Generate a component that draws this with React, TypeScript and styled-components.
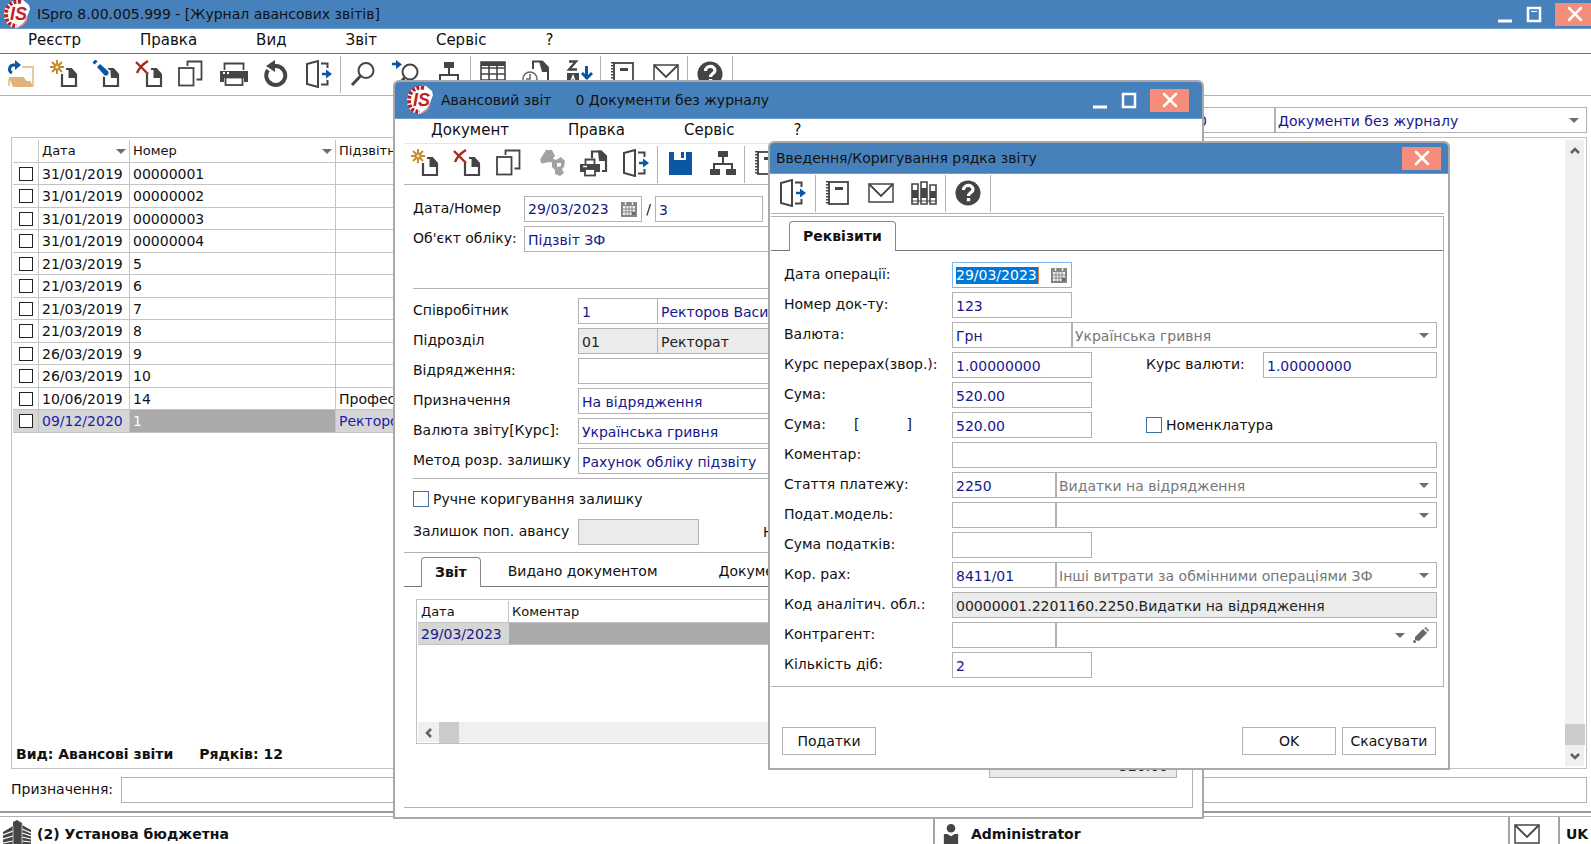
import React, { useId } from "react";
import styled, { createGlobalStyle, css } from "styled-components";

const BLUE = "#4781bb";
const NAVY = "#17178a";
const LINE = "#b2b2b2";
const DARK = "#454545";
const ACCENT = "#0b57a4";

const GlobalStyle = createGlobalStyle`
  *, *::before, *::after { box-sizing: border-box; }
  html, body { margin: 0; height: 100%; }
  body { background: #fff; overflow: hidden; }
  #root { height: 100%; }
  body, input, select, button, textarea {
    font-family: "DejaVu Sans", Verdana, sans-serif;
    font-size: 14px;
    color: #111;
  }
  button { padding: 0; margin: 0; border: 0; background: none; }
  input, select { margin: 0; border-radius: 0; }
`;

/* ---------- icons ---------- */

const Svg = ({ children, size = 28 }: { children: React.ReactNode; size?: number }) => (
  <svg width={size} height={size} viewBox="0 0 28 28" fill="none" aria-hidden="true">
    {children}
  </svg>
);

const DocShape = () => (
  <>
    <path d="M16 9h5l5 6v11H12V14" stroke={DARK} strokeWidth="2.200" />
    <path d="M16 8h5.500L27 14v4h-8.500V10z" fill={DARK} />
  </>
);

const icons: Record<string, React.ReactNode> = {
  open: (
    <>
      <path d="M15 7h11v19" stroke="#e6c596" strokeWidth="1.8" />
      <path d="M2 19v7" stroke="#e6c596" strokeWidth="1.8" />
      <path d="M1.500 17h15l3 4h4l3 6H6z" fill="#deb478" />
      <path d="M5 13C1 11 2 5 7 5h4" stroke={ACCENT} strokeWidth="3" />
      <path d="M8 0l6 5-6 5z" fill={ACCENT} />
    </>
  ),
  create: (
    <>
      <path d="M7 0v14M0 7h14M2 2l10 10M12 2L2 12" stroke="#c98a2b" strokeWidth="2" />
      <circle cx="7" cy="7" r="2.500" fill="#f7e6c8" stroke="#c98a2b" strokeWidth="2" />
      <DocShape />
    </>
  ),
  edit: (
    <>
      <DocShape />
      <path d="M4 7l4-4 9 8 1 6-6-1z" fill={ACCENT} stroke="#fff" strokeWidth="1.500" />
      <path d="M1.500 3.500l3-3" stroke={ACCENT} strokeWidth="3" />
      <path d="M15 16.500l2.500-2.500" stroke="#fff" strokeWidth="1.500" />
    </>
  ),
  remove: (
    <>
      <path d="M1 2l12 12M13 1C8 4 4 8 2 13" stroke="#a62c1d" strokeWidth="2.400" />
      <DocShape />
    </>
  ),
  copy: (
    <>
      <path d="M10.500 6V1.500h14v18h-5" stroke={DARK} strokeWidth="1.800" />
      <rect x="2" y="8" width="14.500" height="17.500" stroke={DARK} strokeWidth="1.800" />
    </>
  ),
  print: (
    <>
      <path d="M4.500 10V3.500h19V10" stroke={DARK} strokeWidth="1.800" />
      <path d="M0 11h28v11h-4v-4H4v4H0z" fill={DARK} />
      <rect x="5.500" y="17.500" width="17" height="7.500" fill="#fff" stroke={DARK} strokeWidth="1.800" />
      <path d="M3 13h2M7 13h2" stroke="#fff" strokeWidth="2" />
    </>
  ),
  refresh: (
    <>
      <path d="M6 10A9.500 9.500 0 1 0 14 6H10" stroke={DARK} strokeWidth="4" />
      <path d="M13 0L4 6l9 6z" fill={DARK} />
    </>
  ),
  exit: (
    <>
      <path d="M2 4l11-3v26L2 24z" stroke={DARK} strokeWidth="2" />
      <path d="M16 3.500h6.500V8M22.500 20v4.500H16" stroke={DARK} strokeWidth="2" />
      <path d="M17 14h6" stroke={ACCENT} strokeWidth="2.500" />
      <path d="M21 9.500l6 4.500-6 4.500z" fill={ACCENT} />
    </>
  ),
  search: (
    <>
      <circle cx="17" cy="10.500" r="7.500" stroke={DARK} strokeWidth="2" />
      <path d="M11.500 16L3 25" stroke={DARK} strokeWidth="3" />
    </>
  ),
  searchNext: (
    <>
      <circle cx="18" cy="12" r="7.500" stroke={DARK} strokeWidth="2" />
      <path d="M12.500 18L5 26" stroke={DARK} strokeWidth="3" />
      <path d="M0 4h5" stroke={ACCENT} strokeWidth="2.500" />
      <path d="M4 0l6 4.500-6 4.500z" fill={ACCENT} />
    </>
  ),
  tree: (
    <>
      <path d="M14 7v8M5 20v-5h18v5" stroke={DARK} strokeWidth="2" />
      <path d="M9 2h10v6H9zM1 20h10v6H1zM17 20h10v6H17z" fill={DARK} />
    </>
  ),
  table: (
    <>
      <path d="M2 2h24v4H2z" fill={DARK} />
      <path d="M2 2h24v24H2zM2 8h24M2 14h24M2 20h24M10 3v23M18 3v23" stroke={DARK} strokeWidth="1.600" />
    </>
  ),
  docClock: (
    <>
      <path d="M11 9V1.500h9l6 6V24h-6" stroke={DARK} strokeWidth="2" />
      <path d="M17 1h4l6 7v4h-7z" fill={DARK} />
      <circle cx="8" cy="19" r="7" stroke="#666" strokeWidth="1.500" fill="#fff" />
      <path d="M8 14v5h-4" stroke="#666" strokeWidth="1.500" />
    </>
  ),
  sort: (
    <>
      <path d="M4 1.500h7L4 9.500h8" stroke={DARK} strokeWidth="2.400" />
      <rect x="2" y="13" width="12" height="13" fill={DARK} />
      <path d="M5 24l3-8 3 8M6 21.500h4" stroke="#fff" strokeWidth="1.500" />
      <path d="M21.500 6v13" stroke={ACCENT} strokeWidth="3" />
      <path d="M17 13l5 5 5-5" stroke={ACCENT} strokeWidth="3" />
    </>
  ),
  notebook: (
    <>
      <rect x="5" y="3" width="19" height="22" stroke={DARK} strokeWidth="1.800" />
      <path d="M4 2v24" stroke={DARK} strokeWidth="4" strokeDasharray="1.500 1.500" />
      <path d="M11 9.500h8" stroke={DARK} strokeWidth="3" />
    </>
  ),
  mail: (
    <>
      <rect x="2" y="5" width="24" height="18" stroke={DARK} strokeWidth="1.500" />
      <path d="M2 5l12 12L26 5" stroke={DARK} strokeWidth="1.800" />
    </>
  ),
  help: (
    <>
      <circle cx="14" cy="14" r="12.500" fill={DARK} />
      <path d="M9.500 11c0-6 9.500-6 9.500-.5 0 3-4.500 3-4.500 6.500" stroke="#fff" strokeWidth="3.200" />
      <path d="M12.800 19h3.400v3.300h-3.400z" fill="#fff" />
    </>
  ),
  books: (
    <>
      <path d="M2 5h6v20H2zM11 3h6v22h-6zM20 6h6v19h-6z" stroke={DARK} strokeWidth="1.600" />
      <path d="M2 11h6v8H2zM11 9h6v10h-6zM20 12h6v7h-6z" fill={DARK} />
      <path d="M2 22h24" stroke={DARK} strokeWidth="1.200" />
    </>
  ),
  save: (
    <>
      <path d="M3 3h23v23H3z" fill={ACCENT} />
      <path d="M8 2h12v9H8z" fill="#fff" />
      <path d="M15 3h3v6h-3z" fill={ACCENT} />
    </>
  ),
  link: (
    <>
      <path d="M8 1h6l3 6-5 6-6 1-2 1-2-4 1-2z" fill="#a2a2a2" />
      <path d="M12 11l6 3" stroke="#a2a2a2" strokeWidth="3" />
      <path
        fillRule="evenodd"
        d="M14 9l4 2 5-3 4 4-1 6-2 2 2 4-4 3-5-2 0-4-3-3zM19 14v4l4-1v-3z"
        fill="#a2a2a2"
      />
    </>
  ),
  printDoc: (
    <>
      <path d="M12 9V2.500h9l5 5V22h-4" stroke={DARK} strokeWidth="2.200" />
      <path d="M18 1.500h3.500L27 7v5h-8z" fill={DARK} />
      <path d="M5.500 15v-4.500h9V15" stroke={DARK} strokeWidth="1.800" />
      <path d="M0 15h20v8H0z" fill={DARK} />
      <rect x="5" y="20" width="10" height="6.500" fill="#fff" stroke={DARK} strokeWidth="1.800" />
      <path d="M3 17.500h4" stroke="#fff" strokeWidth="1.500" />
    </>
  ),
  building: (
    <>
      <path d="M0 12l10-6v22H0zM10 2l4-2 5 3v25h-9zM19 5l9 5v18h-9z" fill={DARK} />
      <path d="M0 15l10-4M0 19l10-3M0 23l10-2M0 27l10-1M19 9l9 4M19 13l9 3M19 17l9 2M19 21l9 1" stroke="#fff" strokeWidth="1.200" />
      <path d="M10 6v22M19 5v23" stroke="#bbb" strokeWidth="1" />
    </>
  ),
  person: (
    <>
      <circle cx="14" cy="6" r="6" fill={DARK} />
      <path d="M4 14h5l5 3 5-3h5v14H4z" fill={DARK} />
    </>
  ),
};

const Icon = ({ name, size }: { name: string; size?: number }) => <Svg size={size}>{icons[name]}</Svg>;

const Logo = () => (
  <svg width="28" height="30" viewBox="0 0 28 30" aria-label="IS" role="img">
    <path d="M20 1C8-1 0 7 1 17c1 8 6 12 13 12 5-3 9-7 10-11l3-8-1-4z" fill="#fff" />
    <path d="M18 3C9 1 3 7 3 15s4 12 11 12" fill="none" stroke="#b3222a" strokeWidth="4" strokeDasharray="3 1.500" />
    <path d="M16 28c4-2 7-5 8-9" fill="none" stroke="#d98a8c" strokeWidth="1.500" />
    <text x="7" y="21" fontFamily="Liberation Sans, Arial, sans-serif" fontSize="18" fontWeight="700" fontStyle="italic" fill="#c01f28">
      IS
    </text>
  </svg>
);

const CalendarIcon = () => (
  <svg width="16" height="16" viewBox="0 0 16 16" aria-hidden="true">
    <path d="M0 1h16v15H0z" fill="#858585" />
    <path d="M2 5h12v9H2z" fill="#f2f2f2" />
    <path d="M2 8h12M2 11h12M5 5v9M8 5v9M11 5v9" stroke="#858585" />
    <path d="M11 11h3v3h-3z" fill="#666" />
    <path d="M4.500 0v4M11.500 0v4" stroke="#eee" strokeWidth="1.500" />
  </svg>
);

const PencilIcon = () => (
  <svg width="16" height="16" viewBox="0 0 16 16" aria-hidden="true">
    <path d="M10 2l4 4-8 8-4-1 0-3z" fill="#686868" />
    <path d="M11 1l2-1 3 3-1 2z" fill="#888" />
    <circle cx="1.500" cy="14.500" r="1.500" fill="#686868" />
  </svg>
);

/* ---------- window chrome ---------- */

const TitleBar = styled.header<{ $height: number; $pad: string }>`
  display: flex;
  align-items: center;
  flex: none;
  height: ${(p) => p.$height}px;
  padding: ${(p) => p.$pad};
  background: ${BLUE};
  border-bottom: 1px solid #6d9bca;
  overflow: hidden;
`;

const TitleText = styled.h1<{ $indent: number }>`
  margin: 0;
  flex: 1;
  display: flex;
  gap: 24px;
  padding-left: ${(p) => p.$indent}px;
  font-size: 14px;
  font-weight: 400;
  white-space: nowrap;
`;

const Controls = styled.div`
  display: flex;
  align-items: center;
  flex: none;
`;

const ControlButton = styled.button<{ $close?: boolean }>`
  display: grid;
  place-items: center;
  width: ${(p) => (p.$close ? 39 : 29)}px;
  height: 23px;
  margin-left: ${(p) => (p.$close ? 7 : 0)}px;
  background: ${(p) => (p.$close ? "#f48d79" : "transparent")};
`;

const CloseButton = () => (
  <ControlButton $close aria-label="Закрити">
    <svg width="16" height="16" viewBox="0 0 16 16" aria-hidden="true">
      <path d="M2 2l12 12M14 2L2 14" stroke="#fff" strokeWidth="2.500" strokeLinecap="round" />
    </svg>
  </ControlButton>
);

const WindowControls = ({ restored }: { restored?: boolean }) => (
  <Controls>
    <ControlButton aria-label="Згорнути">
      <svg width="16" height="18" viewBox="0 0 16 18" aria-hidden="true">
        <path d="M1 16h14" stroke="#fff" strokeWidth="3" />
      </svg>
    </ControlButton>
    <ControlButton aria-label="Розгорнути">
      <svg width="16" height="18" viewBox="0 0 16 18" aria-hidden="true">
        <rect x="2" y="3" width="12" height="13" fill="none" stroke="#fff" strokeWidth="2.500" />
        {restored && <path d="M5 6.500h6" stroke="#fff" />}
      </svg>
    </ControlButton>
    <CloseButton />
  </Controls>
);

const MenuBar = styled.nav<{ $indent: number }>`
  display: flex;
  align-items: center;
  flex: none;
  gap: 59px;
  height: 24px;
  padding: 0 0 2px ${(p) => p.$indent}px;
`;

const MenuItem = styled.button`
  font-size: 15px;
  line-height: 20px;
`;

const Toolbar = styled.div<{ $height: number }>`
  display: flex;
  align-items: center;
  flex: none;
  height: ${(p) => p.$height}px;
  border-bottom: 1px solid ${LINE};
`;

const ToolGroup = styled.div<{ $width: number }>`
  display: flex;
  flex: none;
  width: ${(p) => p.$width}px;
  height: 37px;
  border-right: 1px solid ${LINE};
`;

const ToolButton = styled.button`
  flex: 1 1 0;
  min-width: 0;
  display: grid;
  place-items: center;
  padding-bottom: 2px;
`;

const GROUP_WIDTHS: Record<number, number> = { 1: 45, 2: 87, 3: 130, 6: 254, 8: 341 };

const Tools = ({ groups }: { groups: string[][] }) => (
  <>
    {groups.map((group) => (
      <ToolGroup key={group.join()} $width={GROUP_WIDTHS[group.length]}>
        {group.map((name) => (
          <ToolButton key={name} aria-label={name}>
            <Icon name={name} />
          </ToolButton>
        ))}
      </ToolGroup>
    ))}
  </>
);

const Popup = styled.section`
  position: absolute;
  display: flex;
  flex-direction: column;
  background: #fff;
  border: 2px solid #a9a9a9;
  border-radius: 6px 6px 0 0;
  overflow: hidden;
`;

/* ---------- form parts ---------- */

const boxStyle = css`
  height: 26px;
  border: 1px solid ${LINE};
  background: #fff;
`;

const TextBox = styled.input<{ $width?: number }>`
  ${boxStyle}
  ${(p) => (p.$width ? `width: ${p.$width}px; flex: none;` : "flex: 1; min-width: 0;")}
  padding: 1px 3px 0;
  color: ${NAVY};
  outline: none;
  &:read-only {
    background: #ebebeb;
    color: #222;
  }
`;

const NameBox = styled(TextBox)`
  border-left: 0;
`;

const AmountBox = styled(TextBox)`
  text-align: right;
  padding: 2px 8px 0;
`;

const DateFrame = styled.div<{ $active?: boolean }>`
  ${boxStyle}
  display: flex;
  align-items: center;
  justify-content: space-between;
  flex: none;
  width: ${(p) => (p.$active ? 120 : 118)}px;
  padding: 0 4px 0 3px;
  border-color: ${(p) => (p.$active ? "#7fb6ee" : LINE)};
`;

const DateInput = styled.input<{ $active?: boolean }>`
  width: 83px;
  height: 17px;
  padding: 0;
  border: 0;
  outline: none;
  color: ${(p) => (p.$active ? "#fff" : NAVY)};
  background: ${(p) => (p.$active ? "#0078d7" : "#fff")};
  border-right: 1px solid ${(p) => (p.$active ? "#e08040" : "transparent")};
`;

const PlainButton = styled.button`
  display: grid;
  place-items: center;
`;

const DateBox = ({ id, active }: { id: string; active?: boolean }) => (
  <DateFrame $active={active}>
    <DateInput id={id} $active={active} defaultValue="29/03/2023" />
    <PlainButton aria-label="Календар">
      <CalendarIcon />
    </PlainButton>
  </DateFrame>
);

const SelectFrame = styled.div<{ $width?: number }>`
  ${boxStyle}
  border-left-width: 2px;
  margin-left: -1px;
  display: flex;
  align-items: center;
  ${(p) => (p.$width ? `width: ${p.$width}px; flex: none;` : "flex: 1; min-width: 0;")}
  padding-right: 7px;
  gap: 8px;
`;

const SelectInput = styled.select<{ $dark?: boolean }>`
  appearance: none;
  flex: 1;
  min-width: 0;
  height: 24px;
  padding: 1px 2px 0;
  border: 0;
  outline: none;
  background: transparent;
  color: ${(p) => (p.$dark ? NAVY : "#777")};
`;

const Triangle = styled.span`
  flex: none;
  border: 5px solid transparent;
  border-top-color: #6e6e6e;
  border-bottom: 0;
`;

const Combo = ({
  label,
  value,
  dark,
  width,
  editable,
}: {
  label: string;
  value: string;
  dark?: boolean;
  width?: number;
  editable?: boolean;
}) => (
  <SelectFrame $width={width}>
    <SelectInput aria-label={label} $dark={dark} defaultValue={value}>
      <option>{value}</option>
    </SelectInput>
    <Triangle />
    {editable && (
      <PlainButton aria-label="Редагувати">
        <PencilIcon />
      </PlainButton>
    )}
  </SelectFrame>
);

const Row = styled.div<{ $label: number }>`
  display: grid;
  grid-template-columns: ${(p) => p.$label}px minmax(0, 1fr);
  align-items: center;
  height: 26px;
`;

const Label = styled.label`
  padding-bottom: 2px;
  white-space: nowrap;
`;

const FieldGroup = styled.div`
  display: flex;
  align-items: center;
  min-width: 0;
`;

const Brackets = styled.span`
  display: inline-flex;
  justify-content: space-between;
  width: 58px;
  margin-left: 28px;
`;

const FormRow = ({
  label,
  labelWidth,
  children,
}: {
  label: React.ReactNode;
  labelWidth: number;
  children: (id: string) => React.ReactNode;
}) => {
  const id = useId();
  return (
    <Row $label={labelWidth}>
      <Label htmlFor={id}>{label}</Label>
      <FieldGroup>{children(id)}</FieldGroup>
    </Row>
  );
};

const Tick = styled.label`
  display: inline-flex;
  align-items: center;
  gap: 4px;
  height: 16px;
  white-space: nowrap;
`;

const TickBox = styled.input.attrs({ type: "checkbox" })<{ $size?: number }>`
  appearance: none;
  flex: none;
  width: ${(p) => p.$size ?? 16}px;
  height: ${(p) => p.$size ?? 16}px;
  background: #fff;
  border: 1px solid #41709f;
`;

const RowTick = styled(TickBox)`
  display: block;
  margin: 0 auto;
  border: 1px solid #222;
`;

const TabStrip = styled.div<{ $indent: number }>`
  display: flex;
  flex: none;
  height: 30px;
  &::before {
    content: "";
    width: ${(p) => p.$indent}px;
    border-bottom: 1px solid #777;
  }
  &::after {
    content: "";
    flex: 1;
    border-bottom: 1px solid #777;
  }
`;

const Tab = styled.button<{ $active?: boolean }>`
  flex: none;
  ${(p) =>
    p.$active
      ? css`
          padding: 0 13px 2px;
          font-weight: 700;
          border: 1px solid #888;
          border-bottom: 0;
          border-radius: 4px 4px 0 0;
        `
      : css`
          padding: 0 34px 2px 27px;
          border-bottom: 1px solid #777;
        `}
`;

/* ---------- journal (main window) ---------- */

const Shell = styled.main`
  position: relative;
  display: flex;
  flex-direction: column;
  height: 100%;
  overflow: hidden;
`;

const MainControls = styled.div`
  margin-right: -3px;
`;

const MainToolbar = styled(Toolbar)`
  border-top: 1px solid #6f6f6f;
`;

const FilterRow = styled.div`
  display: flex;
  flex: none;
  justify-content: flex-end;
  padding: 11px 4px 4px;
`;

const GridFrame = styled.div`
  display: flex;
  flex: 1;
  min-height: 0;
  margin: 0 4px 0 11px;
  padding: 2px 2px 2px 1px;
  border: 1px solid #c0c0c6;
`;

const GridBody = styled.div`
  flex: 1;
  min-width: 0;
  display: flex;
  flex-direction: column;
  justify-content: space-between;
`;

const GridTable = styled.table`
  width: 900px;
  table-layout: fixed;
  border-collapse: separate;
  border-spacing: 0;
  th, td {
    height: 22px;
    padding: 0 3px;
    border-right: 1px solid #c4c4c4;
    border-bottom: 1px solid #c4c4c4;
    text-align: left;
    font-weight: 400;
    line-height: 16px;
    white-space: nowrap;
    overflow: hidden;
  }
  th {
    height: 23px;
    font-size: 13px;
  }
  th:first-child, td:first-child { padding: 0; }
  tbody tr:nth-child(even) td { height: 23px; }
`;

const JournalRow = styled.tr<{ $selected: boolean }>`
  ${(p) =>
    p.$selected &&
    css`
      background: #d6d6d6;
      color: #1c1ca8;
      td:nth-child(3) {
        background: #aaa;
        color: #fff;
      }
    `}
`;

const HeadCell = styled.div`
  display: flex;
  align-items: center;
  justify-content: space-between;
`;

const Summary = styled.div`
  display: flex;
  gap: 26px;
  padding: 0 3px 4px;
  font-weight: 700;
  line-height: 16px;
`;

const VScroll = styled.div`
  display: flex;
  flex-direction: column;
  align-items: center;
  flex: none;
  width: 19px;
  background: #efefef;
`;

const ScrollSpace = styled.div`
  flex: 1;
`;

const ScrollThumb = styled.div`
  width: 20px;
  height: 21px;
  background: #cbcbcb;
`;

const ScrollButton = styled.button`
  display: grid;
  place-items: center;
  width: 21px;
  height: 21px;
`;

const Chevron = ({ turn }: { turn: "up" | "down" | "left" }) => (
  <svg width="12" height="12" viewBox="0 0 12 12" fill="none" aria-hidden="true">
    <path
      d={turn === "up" ? "M2 8l4-4 4 4" : turn === "down" ? "M2 4l4 4 4-4" : "M8 2L4 6l4 4"}
      stroke="#606060"
      strokeWidth="2.500"
    />
  </svg>
);

const PurposeRow = styled.div`
  display: flex;
  align-items: center;
  flex: none;
  gap: 8px;
  padding: 8px 4px 8px 11px;
`;

const StatusBar = styled.footer`
  display: flex;
  flex: none;
  height: 33px;
  border-top: 2px solid #999;
  font-weight: 700;
  padding-top: 3px;
`;

const StatusCell = styled.div<{ $width?: number; $gap?: number; $pad: number }>`
  display: flex;
  align-items: center;
  gap: ${(p) => p.$gap ?? 0}px;
  ${(p) => (p.$width ? `flex: none; width: ${p.$width}px;` : "flex: 1;")}
  padding-left: ${(p) => p.$pad}px;
  padding-top: 7px;
  border-top: 1px solid ${LINE};
  & + & { border-left: 2px solid #a4a4a4; }
  white-space: nowrap;
  overflow: hidden;
`;

const journal: [string, string, string][] = [
  ["31/01/2019", "00000001", ""],
  ["31/01/2019", "00000002", ""],
  ["31/01/2019", "00000003", ""],
  ["31/01/2019", "00000004", ""],
  ["21/03/2019", "5", ""],
  ["21/03/2019", "6", ""],
  ["21/03/2019", "7", ""],
  ["21/03/2019", "8", ""],
  ["26/03/2019", "9", ""],
  ["26/03/2019", "10", ""],
  ["10/06/2019", "14", "Професор"],
  ["09/12/2020", "1", "Ректоров"],
];

const Journal = () => (
  <>
    <TitleBar $height={29} $pad="0 0 0 3px">
      <Logo />
      <TitleText $indent={6}>ISpro 8.00.005.999 - [Журнал авансових звітів]</TitleText>
      <MainControls>
        <WindowControls restored />
      </MainControls>
    </TitleBar>
    <MenuBar $indent={28}>
      {["Реєстр", "Правка", "Вид", "Звіт", "Сервіс", "?"].map((m) => (
        <MenuItem key={m}>{m}</MenuItem>
      ))}
    </MenuBar>
    <MainToolbar $height={43}>
      <Tools
        groups={[
          ["open", "create", "edit", "remove", "copy", "print", "refresh", "exit"],
          ["search", "searchNext", "tree"],
          ["table", "docClock", "sort"],
          ["notebook", "mail"],
          ["help"],
        ]}
      />
    </MainToolbar>
    <FilterRow>
      <TextBox $width={81} defaultValue="0" aria-label="Код журналу" />
      <Combo label="Журнал" value="Документи без журналу" dark width={313} />
    </FilterRow>
    <GridFrame>
      <GridBody>
        <GridTable>
          <colgroup>
            <col width="26" />
            <col width="91" />
            <col width="206" />
            <col />
          </colgroup>
          <thead>
            <tr>
              <th aria-label="Вибір" />
              <th>
                <HeadCell>
                  Дата <Triangle />
                </HeadCell>
              </th>
              <th>
                <HeadCell>
                  Номер <Triangle />
                </HeadCell>
              </th>
              <th>Підзвітна особа</th>
            </tr>
          </thead>
          <tbody>
            {journal.map(([date, num, who], i) => (
              <JournalRow key={num} $selected={i === journal.length - 1}>
                <td>
                  <RowTick $size={14} aria-label={`Рядок ${num}`} />
                </td>
                <td>{date}</td>
                <td>{num}</td>
                <td>{who}</td>
              </JournalRow>
            ))}
          </tbody>
        </GridTable>
        <Summary>
          <span>Вид: Авансові звіти</span>
          <span>Рядків: 12</span>
        </Summary>
      </GridBody>
      <VScroll>
        <ScrollButton aria-label="Вгору">
          <Chevron turn="up" />
        </ScrollButton>
        <ScrollSpace />
        <ScrollThumb />
        <ScrollButton aria-label="Вниз">
          <Chevron turn="down" />
        </ScrollButton>
      </VScroll>
    </GridFrame>
    <PurposeRow>
      <Label htmlFor="purpose">Призначення:</Label>
      <TextBox id="purpose" />
    </PurposeRow>
    <StatusBar>
      <StatusCell $pad={3} $gap={6} $width={933}>
        <Icon name="building" /> (2) Установа бюджетна
      </StatusCell>
      <StatusCell $pad={6} $gap={10}>
        <Icon name="person" size={20} /> Administrator
      </StatusCell>
      <StatusCell $pad={3} $width={50}>
        <Icon name="mail" />
      </StatusCell>
      <StatusCell $pad={6} $width={33}>
        UK
      </StatusCell>
    </StatusBar>
  </>
);

/* ---------- advance report window ---------- */

const ReportWindow = styled(Popup)`
  left: 393px;
  top: 80px;
  width: 811px;
  height: 739px;
`;

const ReportContent = styled.div`
  display: flex;
  flex-direction: column;
  flex: 1;
  min-height: 0;
  padding: 0 9px 9px;
`;

const ReportToolbar = styled(Toolbar)`
  border-top: 1px solid #e6e6e6;
`;

const ReportForm = styled.div`
  display: flex;
  flex-direction: column;
  flex: none;
  gap: 4px;
  padding: 11px 12px 7px 9px;
`;

const Rule = styled.hr<{ $above: number; $below: number }>`
  width: 100%;
  margin: ${(p) => `${p.$above}px 0 ${p.$below}px`};
  border: 0;
  border-top: 1px solid ${LINE};
`;

const TickRow = styled.div`
  display: flex;
  padding-bottom: 8px;
`;

const Slash = styled.span`
  width: 13px;
  text-align: center;
`;

const NextLabel = styled.label`
  margin-left: 64px;
`;

const ReportPanel = styled.div`
  display: flex;
  flex-direction: column;
  flex: 1;
  padding-top: 4px;
  border: 1px solid ${LINE};
  border-left: 0;
`;

const LineFrame = styled.div`
  display: flex;
  flex-direction: column;
  justify-content: space-between;
  height: 145px;
  margin: 12px 15px 8px 12px;
  padding: 1px;
  border: 1px solid #c0c0c6;
`;

const LineTable = styled.table`
  width: 100%;
  table-layout: fixed;
  border-collapse: separate;
  border-spacing: 0;
  th, td {
    height: 22px;
    padding: 0 3px;
    text-align: left;
    font-weight: 400;
    border-bottom: 1px solid #c4c4c4;
  }
  th { font-size: 13px; }
  th:first-child { border-right: 1px solid #c4c4c4; }
  td { background: #aaa; }
  td:first-child {
    background: #d6d6d6;
    color: ${NAVY};
  }
`;

const HScroll = styled.div`
  display: flex;
  height: 20px;
  background: #efefef;
`;

const Totals = styled.div`
  display: flex;
  justify-content: flex-end;
  padding-right: 15px;
`;

const Report = () => (
  <ReportWindow>
    <TitleBar $height={37} $pad="0 13px 0 11px">
      <Logo />
      <TitleText $indent={7}>
        <span>Авансовий звіт</span>
        <span>0 Документи без журналу</span>
      </TitleText>
      <WindowControls />
    </TitleBar>
    <MenuBar $indent={36}>
      {["Документ", "Правка", "Сервіс", "?"].map((m) => (
        <MenuItem key={m}>{m}</MenuItem>
      ))}
    </MenuBar>
    <ReportContent>
      <ReportToolbar $height={42}>
        <Tools
          groups={[
            ["create", "remove", "copy", "link", "printDoc", "exit"],
            ["save", "tree"],
            ["notebook", "mail"],
          ]}
        />
      </ReportToolbar>
      <ReportForm>
        <FormRow labelWidth={111} label="Дата/Номер">
          {(id) => (
            <>
              <DateBox id={id} />
              <Slash>/</Slash>
              <TextBox $width={108} defaultValue="3" aria-label="Номер" />
            </>
          )}
        </FormRow>
        <FormRow labelWidth={111} label="Об'єкт обліку:">
          {(id) => <TextBox id={id} defaultValue="Підзвіт ЗФ" />}
        </FormRow>
        <Rule $above={32} $below={5} />
        <FormRow labelWidth={165} label="Співробітник">
          {(id) => (
            <>
              <TextBox id={id} $width={80} defaultValue="1" />
              <NameBox defaultValue="Ректоров Василь" aria-label="ПІБ" />
            </>
          )}
        </FormRow>
        <FormRow labelWidth={165} label="Підрозділ">
          {(id) => (
            <>
              <TextBox id={id} $width={80} readOnly defaultValue="01" />
              <NameBox readOnly defaultValue="Ректорат" aria-label="Назва підрозділу" />
            </>
          )}
        </FormRow>
        <FormRow labelWidth={165} label="Відрядження:">
          {(id) => <TextBox id={id} />}
        </FormRow>
        <FormRow labelWidth={165} label="Призначення">
          {(id) => <TextBox id={id} defaultValue="На відрядження" />}
        </FormRow>
        <FormRow labelWidth={165} label="Валюта звіту[Курс]:">
          {(id) => <TextBox id={id} defaultValue="Українська гривня" />}
        </FormRow>
        <FormRow labelWidth={165} label="Метод розр. залишку">
          {(id) => <TextBox id={id} defaultValue="Рахунок обліку підзвіту" />}
        </FormRow>
        <Rule $above={0} $below={8} />
        <TickRow>
          <Tick>
            <TickBox /> Ручне коригування залишку
          </Tick>
        </TickRow>
        <FormRow labelWidth={165} label="Залишок поп. авансу">
          {(id) => (
            <>
              <TextBox id={id} $width={121} readOnly />
              <NextLabel>Н</NextLabel>
            </>
          )}
        </FormRow>
      </ReportForm>
      <ReportPanel>
        <TabStrip $indent={17}>
          <Tab $active>Звіт</Tab>
          <Tab>Видано документом</Tab>
          <Tab>Документи</Tab>
        </TabStrip>
        <LineFrame>
          <LineTable>
            <colgroup>
              <col width="91" />
              <col />
            </colgroup>
            <thead>
              <tr>
                <th>Дата</th>
                <th>Коментар</th>
              </tr>
            </thead>
            <tbody>
              <tr>
                <td>29/03/2023</td>
                <td />
              </tr>
            </tbody>
          </LineTable>
          <HScroll>
            <ScrollButton aria-label="Ліворуч">
              <Chevron turn="left" />
            </ScrollButton>
            <ScrollThumb />
          </HScroll>
        </LineFrame>
        <Totals>
          <AmountBox $width={188} readOnly defaultValue="520.00" aria-label="Разом" />
        </Totals>
      </ReportPanel>
    </ReportContent>
  </ReportWindow>
);

/* ---------- line entry dialog ---------- */

const EntryDialog = styled(Popup)`
  left: 768px;
  top: 141px;
  width: 682px;
  height: 629px;
`;

const EntryBody = styled.div`
  display: flex;
  flex-direction: column;
  flex: 1;
  padding: 0 4px 0 1px;
`;

const EntryPanel = styled.div`
  margin-top: 2px;
  padding-top: 4px;
  border: 1px solid ${LINE};
  border-left: 0;
`;

const EntryForm = styled.div`
  display: flex;
  flex-direction: column;
  gap: 4px;
  padding: 11px 6px 8px 13px;
`;

const SideLabel = styled(Label)`
  width: 117px;
  margin-left: 54px;
`;

const SideTick = styled(Tick)`
  margin-left: 54px;
`;

const Actions = styled.div`
  display: flex;
  gap: 6px;
  margin: auto 0 13px;
  padding: 0 8px 0 11px;
`;

const ActionButton = styled.button<{ $first?: boolean }>`
  width: 94px;
  height: 28px;
  border: 1px solid ${LINE};
  background: #fff;
  ${(p) => p.$first && "margin-right: auto;"}
`;

const L = 168;

const Entry = () => (
  <EntryDialog role="dialog" aria-label="Введення/Коригування рядка звіту">
    <TitleBar $height={31} $pad="0 7px 0 0">
      <TitleText $indent={6}>Введення/Коригування рядка звіту</TitleText>
      <CloseButton />
    </TitleBar>
    <EntryBody>
      <Toolbar $height={40}>
        <Tools groups={[["exit"], ["notebook", "mail", "books"], ["help"]]} />
      </Toolbar>
      <EntryPanel>
        <TabStrip $indent={18}>
          <Tab $active>Реквізити</Tab>
        </TabStrip>
        <EntryForm>
          <FormRow labelWidth={L} label="Дата операції:">
            {(id) => <DateBox id={id} active />}
          </FormRow>
          <FormRow labelWidth={L} label="Номер док-ту:">
            {(id) => <TextBox id={id} $width={120} defaultValue="123" />}
          </FormRow>
          <FormRow labelWidth={L} label="Валюта:">
            {(id) => (
              <>
                <TextBox id={id} $width={120} defaultValue="Грн" />
                <Combo label="Назва валюти" value="Українська гривня" />
              </>
            )}
          </FormRow>
          <FormRow labelWidth={L} label="Курс перерах(звор.):">
            {(id) => (
              <>
                <TextBox id={id} $width={140} defaultValue="1.00000000" />
                <SideLabel htmlFor="rate">Курс валюти:</SideLabel>
                <TextBox id="rate" defaultValue="1.00000000" />
              </>
            )}
          </FormRow>
          <FormRow labelWidth={L} label="Сума:">
            {(id) => <TextBox id={id} $width={140} defaultValue="520.00" />}
          </FormRow>
          <FormRow
            labelWidth={L}
            label={
              <>
                Сума:
                <Brackets>
                  <span>[</span>
                  <span>]</span>
                </Brackets>
              </>
            }
          >
            {(id) => (
              <>
                <TextBox id={id} $width={140} defaultValue="520.00" />
                <SideTick>
                  <TickBox /> Номенклатура
                </SideTick>
              </>
            )}
          </FormRow>
          <FormRow labelWidth={L} label="Коментар:">
            {(id) => <TextBox id={id} />}
          </FormRow>
          <FormRow labelWidth={L} label="Стаття платежу:">
            {(id) => (
              <>
                <TextBox id={id} $width={104} defaultValue="2250" />
                <Combo label="Назва статті" value="Видатки на відрядження" />
              </>
            )}
          </FormRow>
          <FormRow labelWidth={L} label="Подат.модель:">
            {(id) => (
              <>
                <TextBox id={id} $width={104} />
                <Combo label="Назва моделі" value="" />
              </>
            )}
          </FormRow>
          <FormRow labelWidth={L} label="Сума податків:">
            {(id) => <TextBox id={id} $width={140} />}
          </FormRow>
          <FormRow labelWidth={L} label="Кор. рах:">
            {(id) => (
              <>
                <TextBox id={id} $width={104} defaultValue="8411/01" />
                <Combo label="Назва рахунку" value="Інші витрати за обмінними операціями ЗФ" />
              </>
            )}
          </FormRow>
          <FormRow labelWidth={L} label="Код аналітич. обл.:">
            {(id) => <TextBox id={id} readOnly defaultValue="00000001.2201160.2250.Видатки на відрядження" />}
          </FormRow>
          <FormRow labelWidth={L} label="Контрагент:">
            {(id) => (
              <>
                <TextBox id={id} $width={104} />
                <Combo label="Назва контрагента" value="" editable />
              </>
            )}
          </FormRow>
          <FormRow labelWidth={L} label="Кількість діб:">
            {(id) => <TextBox id={id} $width={140} defaultValue="2" />}
          </FormRow>
        </EntryForm>
      </EntryPanel>
      <Actions>
        <ActionButton $first>Податки</ActionButton>
        <ActionButton>OK</ActionButton>
        <ActionButton>Скасувати</ActionButton>
      </Actions>
    </EntryBody>
  </EntryDialog>
);

export default function App() {
  return (
    <Shell>
      <GlobalStyle />
      <Journal />
      <Report />
      <Entry />
    </Shell>
  );
}
